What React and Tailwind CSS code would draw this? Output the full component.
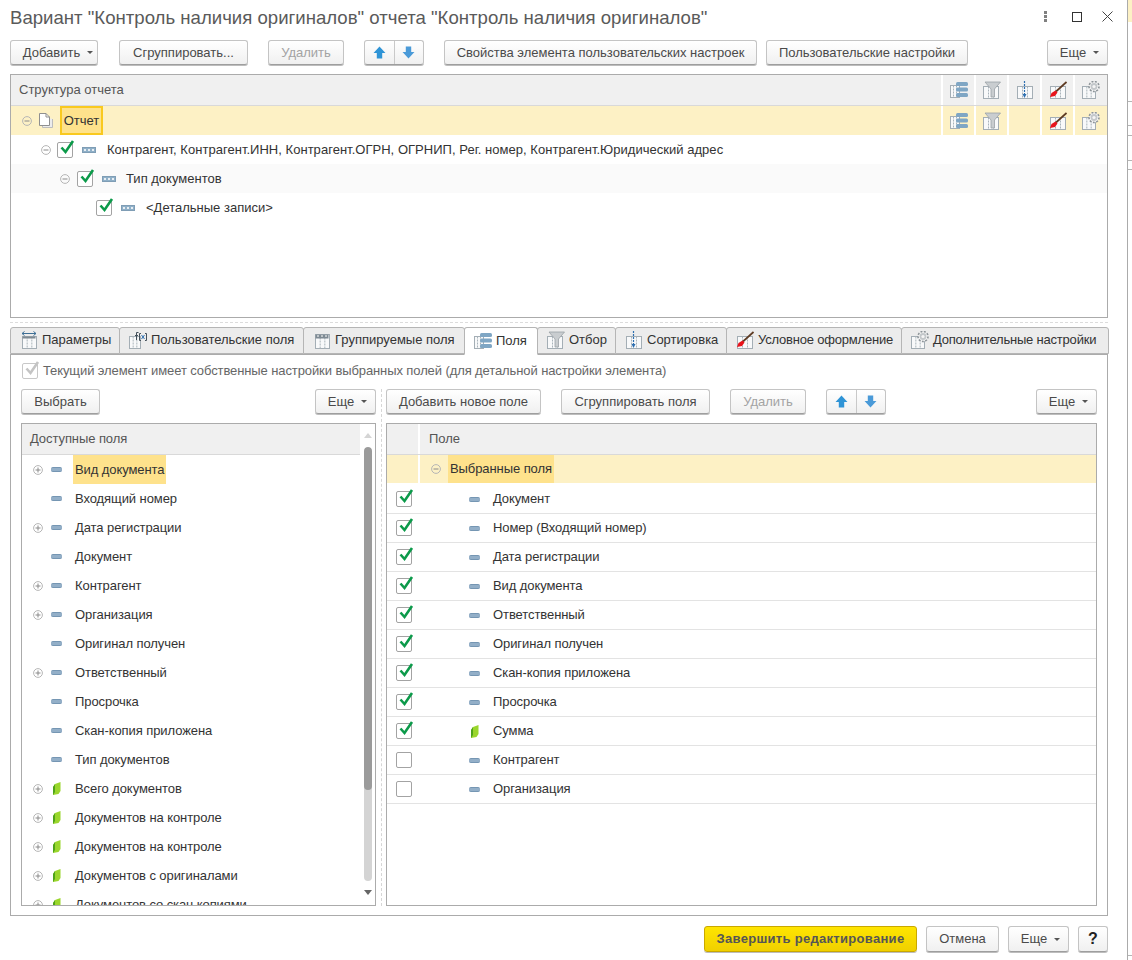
import React from 'react';

const availableFields = [
  { label: 'Вид документа', expand: true, selected: true },
  { label: 'Входящий номер' },
  { label: 'Дата регистрации', expand: true },
  { label: 'Документ' },
  { label: 'Контрагент', expand: true },
  { label: 'Организация', expand: true },
  { label: 'Оригинал получен' },
  { label: 'Ответственный', expand: true },
  { label: 'Просрочка' },
  { label: 'Скан-копия приложена' },
  { label: 'Тип документов' },
  { label: 'Всего документов', expand: true, leaf: true },
  { label: 'Документов на контроле', expand: true, leaf: true },
  { label: 'Документов на контроле', expand: true, leaf: true },
  { label: 'Документов с оригиналами', expand: true, leaf: true },
  { label: 'Документов со скан копиями', expand: true, leaf: true },
];

const chosenFields = [
  { label: 'Документ', checked: true },
  { label: 'Номер (Входящий номер)', checked: true },
  { label: 'Дата регистрации', checked: true },
  { label: 'Вид документа', checked: true },
  { label: 'Ответственный', checked: true },
  { label: 'Оригинал получен', checked: true },
  { label: 'Скан-копия приложена', checked: true },
  { label: 'Просрочка', checked: true },
  { label: 'Сумма', checked: true, leaf: true },
  { label: 'Контрагент' },
  { label: 'Организация' },
];

const Caret = () => (
  <span className="inline-block w-0 h-0 border-x-[3px] border-x-transparent border-t-[3px] border-t-[#555]" />
);

const Btn = ({ className = '', disabled, children }) => (
  <div
    className={`h-[25px] shrink-0 flex items-center justify-center gap-[7px] rounded-[3px] border border-[#c4c4c4] border-b-[#9e9e9e] bg-gradient-to-b from-white to-[#f0f0f0] shadow-[0_1px_0_#bdbdbd] ${
      disabled ? 'text-[#a3a3a3]' : 'text-[#4a4a4a]'
    } ${className}`}
  >
    {children}
  </div>
);

const MoreBtn = ({ className = '' }) => (
  <Btn className={`pl-[4px] ${className}`}>
    Еще <Caret />
  </Btn>
);

const ArrowPair = ({ className = '' }) => (
  <div className={`h-[25px] w-[60px] shrink-0 flex rounded-[3px] border border-[#c4c4c4] border-b-[#9e9e9e] bg-gradient-to-b from-white to-[#f0f0f0] shadow-[0_1px_0_#bdbdbd] ${className}`}>
    <div className="flex-1 flex items-center justify-center border-r border-[#c9c9c9]">
      <svg width="13" height="13" viewBox="0 0 12 12">
        <path d="M6 0.5 L11.5 6.5 H8.5 V11.5 H3.5 V6.5 H0.5 Z" fill="#2f94d6" />
      </svg>
    </div>
    <div className="flex-1 flex items-center justify-center">
      <svg width="13" height="13" viewBox="0 0 12 12">
        <path d="M6 11.5 L11.5 5.5 H8.5 V0.5 H3.5 V5.5 H0.5 Z" fill="#4a9ad8" />
      </svg>
    </div>
  </div>
);

const Expander = ({ plus }) => (
  <svg width="10" height="10" viewBox="0 0 10 10" className="shrink-0">
    <circle cx="5" cy="5" r="4.4" fill="none" stroke="#b5b5b5" />
    <path d={plus ? 'M2.5 5 H7.5 M5 2.5 V7.5' : 'M2.5 5 H7.5'} stroke="#8a8a8a" fill="none" />
  </svg>
);

const Check = ({ checked, muted }) => (
  <div className={`relative w-[16px] h-[16px] shrink-0 rounded-[2px] border bg-white ${muted ? 'border-[#c8c8c8] bg-[#f4f4f4]' : 'border-[#a3a3a3]'}`}>
    {checked && (
      <svg width="18" height="18" viewBox="0 0 18 18" className="absolute left-[1px] top-[-5px]">
        <path d="M2.5 9.5 L6.5 14 L14 3" fill="none" stroke={muted ? '#c4c4c4' : '#0c9a4a'} strokeWidth="2.6" />
      </svg>
    )}
  </div>
);

const GroupMark = () => (
  <svg width="14" height="6" viewBox="0 0 14 6" className="shrink-0">
    <rect x="0.5" y="0.5" width="13" height="5" fill="#8fb0c8" stroke="#7f9db5" />
    <path d="M2 2 H4 V4 H2 Z M6 2 H8 V4 H6 Z M10 2 H12 V4 H10 Z" fill="#e8eef3" />
  </svg>
);

const DashMark = () => (
  <div className="w-[11px] h-[5px] shrink-0 rounded-[2px] bg-[#93afc8] border-y border-[#7596b3]" />
);

const LeafMark = () => (
  <svg width="8" height="13" viewBox="0 0 8 13" className="shrink-0">
    <path d="M2 2 L7.5 0 V9 L5.5 12 L0 13 V5 Z" fill="#9ad62c" />
    <path d="M0 13 V5 L2 2 V10 Z" fill="#4fa31a" />
  </svg>
);

const DocIcon = () => (
  <svg width="14" height="15" viewBox="0 0 14 15" className="shrink-0">
    <path d="M3.5 3 V14.5 H13.5 V6" fill="#ececec" stroke="#bdbdbd" />
    <path d="M0.5 0.5 H7 L10.5 4 V12.5 H0.5 Z" fill="#fff" stroke="#8f8f8f" />
    <path d="M7 0.5 V4 H10.5" fill="none" stroke="#8f8f8f" />
  </svg>
);

const TableBase = ({ x = 0, y = 6, w = 14, h = 14 }) => (
  <g>
    <rect x={x + 0.5} y={y + 0.5} width={w} height={h} fill="#f8f9fa" stroke="#a4aeb5" />
    <path d={`M${x + w / 3 + 0.5} ${y + 0.5} V${y + h + 0.5} M${x + (2 * w) / 3 + 0.5} ${y + 0.5} V${y + h + 0.5}`} stroke="#a9b3ba" strokeDasharray="2 1" />
  </g>
);

const FieldsIcon = () => (
  <svg width="18" height="18" viewBox="0 0 18 18" className="shrink-0">
    <TableBase x={0} y={4} w={9} h={12} />
    <rect x="6" y="1" width="12" height="4" rx="1.5" fill="#7fa6c4" />
    <rect x="6" y="6.5" width="12" height="4" rx="1.5" fill="#7fa6c4" />
    <rect x="6" y="12" width="12" height="4" rx="1.5" fill="#7fa6c4" />
  </svg>
);

const FilterIcon = () => (
  <svg width="18" height="18" viewBox="0 0 18 18" className="shrink-0">
    <TableBase x={0} y={5} w={15} h={12} />
    <path d="M2 1 H17.5 L11.5 8 V16 H8 V8 Z" fill="#c9cdd0" stroke="#9aa1a6" strokeWidth="0.8" />
  </svg>
);

const SortIcon = () => (
  <svg width="18" height="18" viewBox="0 0 18 18" className="shrink-0">
    <TableBase x={1} y={5} w={15} h={12} />
    <path d="M8.5 0 V15" stroke="#2e6fb0" strokeWidth="1.2" strokeDasharray="2 1" />
    <path d="M6.5 13 H10.5 L8.5 17 Z" fill="#2e6fb0" />
  </svg>
);

const BrushIcon = () => (
  <svg width="18" height="18" viewBox="0 0 18 18" className="shrink-0">
    <TableBase x={1} y={5} w={15} h={12} />
    <path d="M17.5 1 L7 10.5" stroke="#5d3a22" strokeWidth="1.7" />
    <path d="M6.5 9.5 L8.5 11.5 L6 15 L1 16 L2.5 12 Z" fill="#e8141c" />
  </svg>
);

const GearIcon = () => (
  <svg width="18" height="18" viewBox="0 0 18 18" className="shrink-0">
    <TableBase x={0} y={5} w={13} h={12} />
    <circle cx="12" cy="5.5" r="5" fill="#f4f4f4" stroke="#8d9499" strokeWidth="1.6" strokeDasharray="2 1.4" />
    <circle cx="12" cy="5.5" r="3.4" fill="#c3c7ca" />
    <circle cx="12" cy="5.5" r="1.6" fill="#f5f5f5" />
  </svg>
);

const ParamIcon = () => (
  <svg width="18" height="18" viewBox="0 0 18 18" className="shrink-0">
    <TableBase x={2} y={5} w={14} h={12} />
    <rect x="2.5" y="5.5" width="13" height="2" fill="#7e8a93" />
    <path d="M2 2.5 H16 M2 2.5 L4.5 0.5 M2 2.5 L4.5 4.5 M16 2.5 L13.5 0.5 M16 2.5 L13.5 4.5" stroke="#3d6f96" fill="none" />
  </svg>
);

const CustomIcon = () => (
  <svg width="18" height="18" viewBox="0 0 18 18" className="shrink-0">
    <TableBase x={0} y={5} w={11} h={12} />
    <path d="M9.5 1.5 H7.5 V9 M6 4.5 H9" stroke="#44505a" fill="none" />
    <path d="M12 2.5 H10.5 V9.5 H12 M16 2.5 H17.5 V9.5 H16" stroke="#44505a" fill="none" />
    <path d="M12.5 4 L15.5 8 M15.5 4 L12.5 8" stroke="#2e6fb0" />
  </svg>
);

const GroupFieldsIcon = () => (
  <svg width="18" height="18" viewBox="0 0 18 18" className="shrink-0">
    <TableBase x={2} y={3} w={14} h={14} />
    <rect x="2.5" y="3.5" width="13" height="4" fill="#7e8a93" />
    <path d="M4 5 H6 M8 5 H10 M12 5 H14" stroke="#fff" strokeWidth="1.2" />
  </svg>
);

const tabs = [
  { label: 'Параметры', Icon: ParamIcon, w: 'w-[110px]' },
  { label: 'Пользовательские поля', Icon: CustomIcon, w: 'w-[185px]' },
  { label: 'Группируемые поля', Icon: GroupFieldsIcon, w: 'w-[162px]' },
  { label: 'Поля', Icon: FieldsIcon, w: 'w-[74px]', active: true },
  { label: 'Отбор', Icon: FilterIcon, w: 'w-[79px]' },
  { label: 'Сортировка', Icon: SortIcon, w: 'w-[112px]' },
  { label: 'Условное оформление', Icon: BrushIcon, w: 'w-[176px]', tight: true },
  { label: 'Дополнительные настройки', Icon: GearIcon, w: 'w-[208px]', tight: true },
];

// чёрточки соседнего окна справа от диалога
const edgeTicks = ['top-[101px]', 'top-[125px]', 'top-[135px]', 'top-[160px]', 'top-[169px]', 'top-[955px]'];

const StructureCell = ({ children, last }) => (
  <div className={`w-[33px] shrink-0 flex items-center justify-center border-l-2 border-white ${last ? 'w-[34px]' : ''}`}>
    {children}
  </div>
);

const App = () => {
  return (
    <div className="relative w-[1132px] h-[960px] overflow-hidden bg-white text-[13px] text-[#333] font-['Liberation_Sans',Arial,sans-serif]">
      {/* край окна позади диалога */}
      <div className="absolute left-[1127px] top-0 bottom-0 right-0 border-l border-[#ababab]">
        <div className="h-[22px] bg-[#fdf1c5]" />
        {edgeTicks.map((t) => (
          <div key={t} className={`absolute left-0 right-0 h-px bg-[#b5b5b5] ${t}`} />
        ))}
      </div>

      <div className="w-[1108px] ml-[10px]">
        {/* Заголовок */}
        <div className="relative h-[35px] flex items-center text-[18.6px] text-[#5a5a5a]">
          Вариант "Контроль наличия оригиналов" отчета "Контроль наличия оригиналов"
          <div className="absolute left-[1034px] top-[11px] flex flex-col gap-[1px]">
            <span className="w-[3px] h-[3px] bg-[#808080]" />
            <span className="w-[3px] h-[3px] bg-[#808080]" />
            <span className="w-[3px] h-[3px] bg-[#808080]" />
          </div>
          <div className="absolute left-[1062px] top-[12px] w-[10px] h-[10px] border border-[#333]" />
          <svg width="11" height="11" viewBox="0 0 11 11" className="absolute left-[1092px] top-[11px]">
            <path d="M0.5 0.5 L10.5 10.5 M10.5 0.5 L0.5 10.5" stroke="#444" />
          </svg>
        </div>

        {/* Панель команд */}
        <div className="w-[1098px] mt-[5px] h-[25px] flex">
          <Btn className="w-[88px] pl-[8px]">Добавить <Caret /></Btn>
          <Btn className="w-[129px] ml-[21px]">Сгруппировать...</Btn>
          <Btn className="w-[76px] ml-[20px]" disabled>Удалить</Btn>
          <ArrowPair className="ml-[20px]" />
          <Btn className="w-[313px] ml-[20px]">Свойства элемента пользовательских настроек</Btn>
          <Btn className="w-[202px] ml-[9px]">Пользовательские настройки</Btn>
          <MoreBtn className="w-[61px] ml-[79px]" />
        </div>

        {/* Структура отчета */}
        <div className="w-[1098px] h-[244px] mt-[9px] border border-[#ababab]">
          <div className="h-[31px] flex bg-[#f0f0f0] border-b border-[#d9d9d9] text-[#555]">
            <div className="flex-1 flex items-center pl-[8px]">Структура отчета</div>
            <StructureCell><FieldsIcon /></StructureCell>
            <StructureCell><FilterIcon /></StructureCell>
            <StructureCell><SortIcon /></StructureCell>
            <StructureCell><BrushIcon /></StructureCell>
            <StructureCell last><GearIcon /></StructureCell>
          </div>
          <div className="h-[29px] flex bg-[#fdf1c5]">
            <div className="flex-1 flex items-center pl-[11px]">
              <Expander />
              <span className="ml-[7px]"><DocIcon /></span>
              <div className="ml-[7px] h-full w-[43px] flex items-center justify-center bg-[#fee28c] border-2 border-[#f9c91f]">Отчет</div>
            </div>
            <StructureCell><FieldsIcon /></StructureCell>
            <StructureCell><FilterIcon /></StructureCell>
            <StructureCell />
            <StructureCell><BrushIcon /></StructureCell>
            <StructureCell last><GearIcon /></StructureCell>
          </div>
          <div className="h-[29px] flex items-center pl-[30px]">
            <Expander />
            <span className="ml-[6px]"><Check checked /></span>
            <span className="ml-[9px]"><GroupMark /></span>
            <span className="ml-[11px] tracking-[0.03px]">Контрагент, Контрагент.ИНН, Контрагент.ОГРН, ОГРНИП, Рег. номер, Контрагент.Юридический адрес</span>
          </div>
          <div className="h-[29px] flex items-center pl-[49px] bg-[#fafafa]">
            <Expander />
            <span className="ml-[7px]"><Check checked /></span>
            <span className="ml-[9px]"><GroupMark /></span>
            <span className="ml-[10px]">Тип документов</span>
          </div>
          <div className="h-[29px] flex items-center pl-[85px]">
            <Check checked />
            <span className="ml-[9px]"><GroupMark /></span>
            <span className="ml-[11px]">{'<Детальные записи>'}</span>
          </div>
        </div>

        {/* Разделитель */}
        <div className="w-[1098px] h-[9px] flex items-center">
          <div className="w-full border-t border-dashed border-[#dcdcdc]" />
        </div>

        {/* Вкладки */}
        <div className="w-[1098px] h-[27px] flex relative z-10">
          {tabs.map(({ label, Icon, w, active, tight }) => (
            <div
              key={label}
              className={`${w} shrink-0 flex items-center gap-[4px] pl-[9px] pb-[1px] rounded-t-[3px] border border-[#b5b5b5] -mr-[1px] ${
                active ? 'h-[28px] bg-white border-b-white' : 'h-[27px] bg-[#ececec]'
              }`}
            >
              <Icon />
              <span className={`whitespace-nowrap ${tight ? 'tracking-[-0.2px]' : ''}`}>{label}</span>
            </div>
          ))}
        </div>

        <div className="w-[1098px] h-[562px] border border-[#ababab] px-[9px]">
          <div className="h-[34px] pb-[2px] flex items-center gap-[5px] pl-[2px] text-[#666] tracking-[-0.1px]">
            <Check checked muted />
            Текущий элемент имеет собственные настройки выбранных полей (для детальной настройки элемента)
          </div>

          <div className="flex">
            {/* Доступные поля */}
            <div className="w-[355px] ml-[1px] shrink-0">
              <div className="h-[25px] flex justify-between">
                <Btn className="w-[79px]">Выбрать</Btn>
                <MoreBtn className="w-[61px]" />
              </div>
              <div className="relative h-[483px] mt-[9px] border border-[#ababab] overflow-hidden tracking-[-0.08px]">
                <div className="h-[31px] mr-[15px] flex items-center pl-[8px] bg-[#f0f0f0] border-b border-[#d9d9d9] text-[#555]">Доступные поля</div>
                {availableFields.map((field, i) => (
                  <div key={i} className="h-[29px] flex items-center pl-[11px]">
                    <div className="w-[10px] shrink-0">
                      {field.expand && <Expander plus />}
                    </div>
                    <div className="w-[11px] ml-[8px] shrink-0 flex justify-center">
                      {field.leaf ? <LeafMark /> : <DashMark />}
                    </div>
                    <div className={`ml-[11px] h-full flex items-center px-[2px] ${field.selected ? 'bg-[#fee28c]' : ''}`}>{field.label}</div>
                  </div>
                ))}
                {/* Полоса прокрутки */}
                <div className="absolute right-0 top-0 bottom-0 w-[15px] bg-white flex flex-col items-center">
                  <span className="mt-[9px] w-0 h-0 border-x-[4px] border-x-transparent border-b-[5px] border-b-[#d5d5d5]" />
                  <div className="mt-[9px] w-[8px] h-[434px] rounded-[4px] bg-[#d4d4d4] overflow-hidden">
                    <div className="w-full h-[343px] rounded-[4px] bg-[#9b9b9b]" />
                  </div>
                  <span className="mt-[9px] w-0 h-0 border-x-[4px] border-x-transparent border-t-[5px] border-t-[#666]" />
                </div>
              </div>
            </div>

            <div className="w-[10px] shrink-0 flex justify-center">
              <div className="h-full border-l border-dashed border-[#d6d6d6]" />
            </div>

            {/* Выбранные поля */}
            <div className="w-[711px] shrink-0">
              <div className="h-[25px] flex">
                <Btn className="w-[155px]">Добавить новое поле</Btn>
                <Btn className="w-[149px] ml-[20px]">Сгруппировать поля</Btn>
                <Btn className="w-[76px] ml-[20px]" disabled>Удалить</Btn>
                <ArrowPair className="ml-[20px]" />
                <MoreBtn className="w-[61px] ml-[150px]" />
              </div>
              <div className="h-[483px] mt-[9px] border border-[#ababab] overflow-hidden tracking-[-0.08px]">
                <div className="h-[31px] flex bg-[#f0f0f0] border-b border-[#d9d9d9] text-[#555]">
                  <div className="w-[33px] border-r-2 border-white" />
                  <div className="flex-1 flex items-center pl-[9px]">Поле</div>
                </div>
                <div className="h-[30px] flex bg-[#fdf1c5] border-b-2 border-white">
                  <div className="w-[33px] border-r-2 border-white" />
                  <div className="flex items-center pl-[11px]">
                    <Expander />
                    <div className="ml-[7px] h-full flex items-center px-[2px] bg-[#fee28c]">Выбранные поля</div>
                  </div>
                </div>
                {chosenFields.map((field) => (
                  <div key={field.label} className="h-[29px] flex items-center border-b border-[#e3e3e3]">
                    <div className="w-[34px] shrink-0 pl-[9px]"><Check checked={field.checked} /></div>
                    <div className="w-[11px] ml-[48px] shrink-0 flex justify-center">
                      {field.leaf ? <LeafMark /> : <DashMark />}
                    </div>
                    <span className="ml-[13px]">{field.label}</span>
                  </div>
                ))}
              </div>
            </div>
          </div>
        </div>

        {/* Нижние кнопки */}
        <div className="w-[1098px] h-[26px] mt-[10px] flex justify-end">
          <div className="w-[213px] h-[26px] flex items-center justify-center rounded-[3px] border border-[#c9a800] bg-gradient-to-b from-[#ffe500] to-[#f0d000] font-bold text-[#555] tracking-[0.3px] shadow-[0_1px_0_#bdbdbd]">
            Завершить редактирование
          </div>
          <Btn className="w-[73px] ml-[9px] h-[26px]">Отмена</Btn>
          <MoreBtn className="w-[61px] ml-[9px] h-[26px]" />
          <Btn className="w-[30px] ml-[9px] h-[26px] font-bold text-[16px] text-[#222]">?</Btn>
        </div>
      </div>
    </div>
  );
};

export default App;
